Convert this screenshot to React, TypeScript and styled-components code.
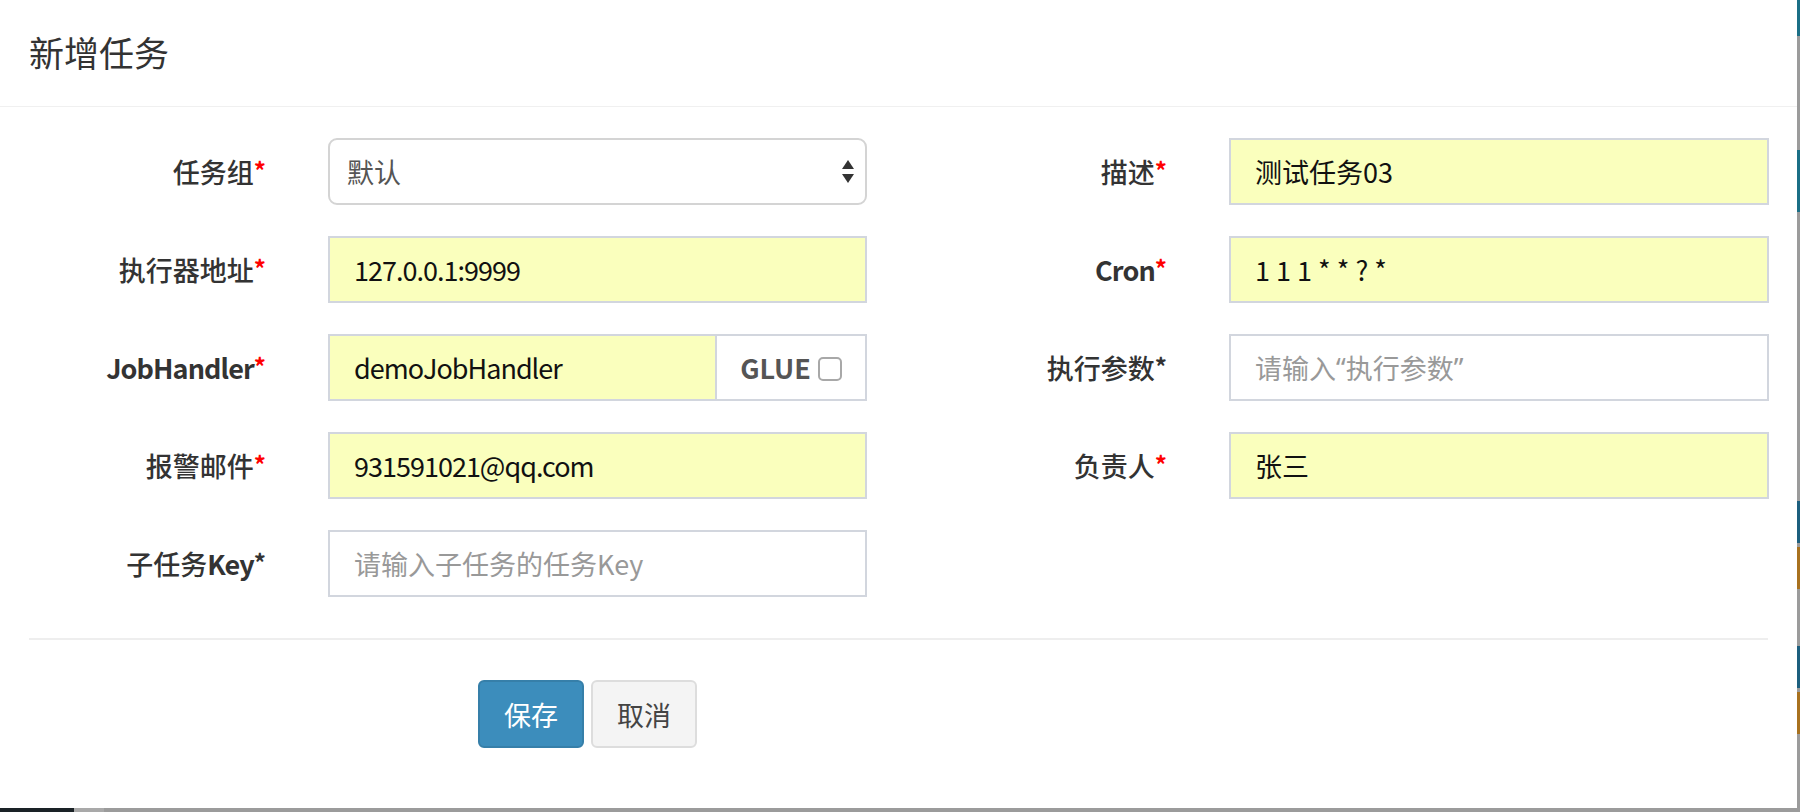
import React from "react";
import styled, { createGlobalStyle } from "styled-components";

const GlobalStyle = createGlobalStyle`
  html, body {
    margin: 0;
    padding: 0;
    background: #9b9b9b;
  }
  * {
    box-sizing: border-box;
  }
  body {
    font-family: "Noto Sans CJK SC", "Noto Sans", sans-serif;
  }
`;

const Screen = styled.div`
  width: 1800px;
  height: 812px;
  overflow: hidden;
  display: flex;
  flex-direction: column;
  background: #9b9b9b;
`;

const TopRow = styled.div`
  display: flex;
  height: 808px;
`;

const Modal = styled.div`
  width: 1797px;
  height: 808px;
  background: #fff;
  display: flex;
  flex-direction: column;
`;

const EdgeColumn = styled.div`
  width: 3px;
  display: flex;
  flex-direction: column;
`;

const EdgeBit = styled.div<{ $h: number; $c: string }>`
  height: ${(p) => p.$h}px;
  background: ${(p) => p.$c};
  flex-shrink: 0;
`;

const BottomEdge = styled.div`
  display: flex;
  height: 4px;
`;

const BottomBit = styled.div<{ $w?: number; $c: string }>`
  width: ${(p) => (p.$w ? `${p.$w}px` : "auto")};
  flex: ${(p) => (p.$w ? "0 0 auto" : "1")};
  background: ${(p) => p.$c};
`;

const Header = styled.div`
  height: 107px;
  padding: 0 29px 4px;
  display: flex;
  align-items: center;
  border-bottom: 1px solid #f0f0f0;
`;

const Title = styled.h4`
  margin: 0;
  font-size: 35px;
  font-weight: 400;
  color: #333;
`;

const Body = styled.div`
  padding: 31px 29px 0;
`;

const FormGrid = styled.div`
  display: grid;
  grid-template-columns: 237px 539px 238px 540px;
  column-gap: 62px;
  row-gap: 31px;
  grid-auto-rows: 67px;
`;

const Label = styled.label`
  display: flex;
  align-items: center;
  justify-content: flex-end;
  font-size: 27px;
  font-weight: 500;
  color: #333;
  white-space: nowrap;
`;

const Latin = styled.b`
  font-weight: 700;
  letter-spacing: -0.9px;
`;

const Star = styled.span<{ $red?: boolean }>`
  color: ${(p) => (p.$red ? "#f00" : "#333")};
  font-size: 24px;
  font-weight: 700;
  align-self: flex-start;
  margin-top: 14px;
`;

const Input = styled.div<{ $filled?: boolean; $tight?: boolean }>`
  height: 67px;
  flex: 1;
  display: flex;
  align-items: center;
  padding: 0 24px;
  border: 2px solid #d2d6de;
  background: ${(p) => (p.$filled ? "#faffbd" : "#fff")};
  font-size: 27px;
  letter-spacing: ${(p) => (p.$tight ? "-1px" : "0")};
  color: ${(p) => (p.$filled ? "#111" : "#999")};
  white-space: nowrap;
`;

const Quote = styled.span`
  font-family: "Noto Sans", sans-serif;
`;

const Select = styled.div`
  height: 67px;
  display: flex;
  align-items: center;
  justify-content: space-between;
  padding: 0 10px 0 17px;
  border: 2px solid #d4d4d4;
  border-radius: 9px;
  background: #fff;
  font-size: 27px;
  color: #555;
`;

const InputGroup = styled.div`
  display: flex;
  height: 67px;
`;

const Addon = styled.div`
  width: 150px;
  display: flex;
  align-items: center;
  justify-content: center;
  gap: 7px;
  border: 2px solid #d2d6de;
  border-left: none;
  background: #fff;
  font-size: 27px;
  font-weight: 700;
  color: #555;
`;

const CheckBox = styled.span`
  width: 24px;
  height: 24px;
  border: 2px solid #a8a8a8;
  border-radius: 5px;
  background: #fff;
  margin-top: 3px;
`;

const Divider = styled.hr`
  margin: 41px 0 0;
  border: none;
  border-top: 2px solid #eee;
`;

const Footer = styled.div`
  display: flex;
  gap: 7px;
  padding: 40px 0 0 449px;
`;

const Button = styled.button<{ $primary?: boolean }>`
  height: 68px;
  padding: 0 24px;
  font-family: inherit;
  font-size: 27px;
  border-radius: 6px;
  border: 2px solid ${(p) => (p.$primary ? "#367fa9" : "#ddd")};
  background: ${(p) => (p.$primary ? "#3c8dbc" : "#f4f4f4")};
  color: ${(p) => (p.$primary ? "#fff" : "#444")};
`;

const SelectArrows = () => (
  <svg width="14" height="26" viewBox="0 0 14 26">
    <path d="M7 1 L13 10 L1 10 Z" fill="#333" />
    <path d="M1 15 L13 15 L7 24 Z" fill="#333" />
  </svg>
);

const edge = [
  { h: 36, c: "#1b6f86" },
  { h: 114, c: "#9b9b9b" },
  { h: 62, c: "#1b6f86" },
  { h: 289, c: "#9b9b9b" },
  { h: 42, c: "#1d5f7e" },
  { h: 4, c: "#9b9b9b" },
  { h: 42, c: "#a8711f" },
  { h: 57, c: "#9b9b9b" },
  { h: 42, c: "#1d5f7e" },
  { h: 4, c: "#9b9b9b" },
  { h: 42, c: "#a8711f" },
  { h: 74, c: "#9b9b9b" },
];

function FieldLabel({ text, bold, red }: { text?: string; bold?: string; red?: boolean }) {
  return (
    <Label>
      {text}
      {bold && <Latin>{bold}</Latin>}
      <Star $red={red}>*</Star>
    </Label>
  );
}

export default function App() {
  return (
    <Screen>
      <GlobalStyle />
      <TopRow>
        <Modal>
          <Header>
            <Title>新增任务</Title>
          </Header>
          <Body>
            <FormGrid>
              <FieldLabel text="任务组" red />
              <Select>
                <span>默认</span>
                <SelectArrows />
              </Select>
              <FieldLabel text="描述" red />
              <Input $filled>测试任务03</Input>

              <FieldLabel text="执行器地址" red />
              <Input $filled $tight>127.0.0.1:9999</Input>
              <FieldLabel bold="Cron" red />
              <Input $filled>1 1 1 * * ? *</Input>

              <FieldLabel bold="JobHandler" red />
              <InputGroup>
                <Input $filled $tight>demoJobHandler</Input>
                <Addon>
                  GLUE
                  <CheckBox />
                </Addon>
              </InputGroup>
              <FieldLabel text="执行参数" />
              <Input>
                请输入<Quote>“</Quote>执行参数<Quote>”</Quote>
              </Input>

              <FieldLabel text="报警邮件" red />
              <Input $filled $tight>931591021@qq.com</Input>
              <FieldLabel text="负责人" red />
              <Input $filled>张三</Input>

              <FieldLabel text="子任务" bold="Key" />
              <Input>请输入子任务的任务Key</Input>
            </FormGrid>
            <Divider />
            <Footer>
              <Button $primary>保存</Button>
              <Button>取消</Button>
            </Footer>
          </Body>
        </Modal>
        <EdgeColumn>
          {edge.map((e, i) => (
            <EdgeBit key={i} $h={e.h} $c={e.c} />
          ))}
        </EdgeColumn>
      </TopRow>
      <BottomEdge>
        <BottomBit $w={74} $c="#1a2226" />
        <BottomBit $w={30} $c="#a9a9a9" />
        <BottomBit $c="#9b9b9b" />
      </BottomEdge>
    </Screen>
  );
}
